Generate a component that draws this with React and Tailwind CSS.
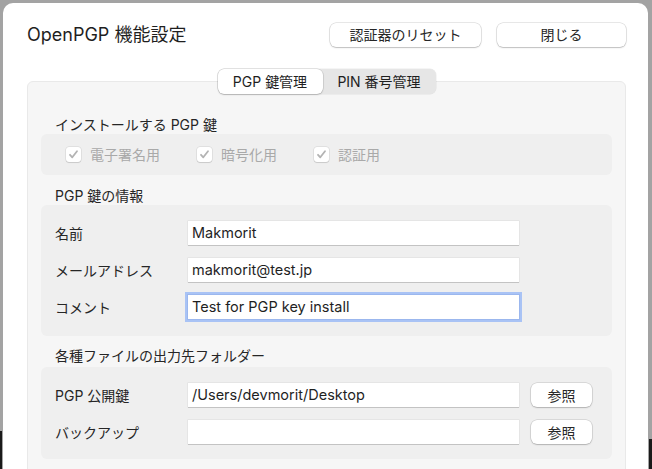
const font = { fontFamily: '"Inter", "Noto Sans CJK JP", sans-serif' };

const Button = ({ children, className = "" }) => (
  <button
    className={`h-[24px] rounded-[6px] bg-white text-[14px] text-[#262626] shadow-[0_0_0_0.5px_rgba(0,0,0,0.18),0_1px_1.5px_rgba(0,0,0,0.18)] ${className}`}
  >
    {children}
  </button>
);

const Field = ({ value, focused }) => (
  <div
    className={`flex h-[24px] w-[331px] items-center bg-white px-[4px] text-[14.5px] text-[#1f1f1f] ${
      focused
        ? "shadow-[0_0_0_1px_#9bb7ee,0_0_0_3px_#a9c3f5]"
        : "shadow-[0_0_0_0.5px_rgba(0,0,0,0.08),0_1px_0_rgba(0,0,0,0.15)]"
    }`}
  >
    {value}
  </div>
);

const Check = ({ label }) => (
  <div className="flex items-center gap-[9px]">
    <div className="flex h-[15px] w-[15px] items-center justify-center rounded-[3px] bg-white shadow-[0_0_0_0.5px_rgba(0,0,0,0.12),0_1px_1px_rgba(0,0,0,0.1)]">
      <svg width="11" height="11" viewBox="0 0 11 11">
        <path d="M2 5.8 L4.3 8.3 L9 2.2" fill="none" stroke="#b3b3b3" strokeWidth="1.8" strokeLinecap="round" strokeLinejoin="round" />
      </svg>
    </div>
    <span className="text-[14px] text-[#a9a9a9]">{label}</span>
  </div>
);

const SectionLabel = ({ children }) => (
  <div className="h-[17px] pl-[14px] text-[14px] leading-[17px] text-[#262626]">{children}</div>
);

const Row = ({ label, value, focused, browse }) => (
  <div className="flex items-center">
    <div className="w-[133px] text-[14px] text-[#262626]">{label}</div>
    <Field value={value} focused={focused} />
    {browse && <Button className="ml-[12px] w-[61px]">参照</Button>}
  </div>
);

const App = () => {
  return (
    <div className="relative h-[469px] w-[652px] overflow-hidden bg-[#a3a3a3] pl-[3px] pr-[4px] pt-[3px]" style={font}>
      <div className="absolute bottom-0 left-0 h-[38px] w-[2px] bg-[#1a1a1a]" />
      <div className="absolute bottom-0 right-0 h-[30px] w-[3px] bg-[#1a1a1a]" />
      <div className="flex h-full flex-col rounded-t-[10px] bg-white">
        <div className="flex items-center pl-[24px] pr-[22px] pt-[18px]">
          <div className="text-[18px] text-[#1f1f1f]">OpenPGP 機能設定</div>
          <div className="ml-auto flex gap-[16px]">
            <Button className="w-[151px]">認証器のリセット</Button>
            <Button className="w-[129px]">閉じる</Button>
          </div>
        </div>

        <div className="ml-[24px] mr-[22px] mt-[21px] flex flex-col">
          <div className="relative z-10 flex self-center rounded-[6px] bg-[#e6e6e6] shadow-[0_0_0_0.5px_rgba(0,0,0,0.08)]">
            <div className="flex h-[25px] w-[105px] items-center justify-center rounded-[6px] bg-white text-[14px] text-[#1f1f1f] shadow-[0_0_0_0.5px_rgba(0,0,0,0.15),0_1px_1.5px_rgba(0,0,0,0.18)]">
              PGP 鍵管理
            </div>
            <div className="flex h-[25px] w-[113px] items-center justify-center text-[14px] text-[#1f1f1f]">
              PIN 番号管理
            </div>
          </div>

          <div className="-mt-[13px] h-[400px] rounded-t-[6px] border border-[#e9e9e9] bg-[#f6f6f6] px-[13px] pt-[34px]">
            <SectionLabel>インストールする PGP 鍵</SectionLabel>
            <div className="mt-[1px] flex h-[41px] items-center gap-[37px] rounded-[6px] bg-[#efefef] pl-[25px]">
              <Check label="電子署名用" />
              <Check label="暗号化用" />
              <Check label="認証用" />
            </div>

            <div className="mt-[12px]">
              <SectionLabel>PGP 鍵の情報</SectionLabel>
            </div>
            <div className="mt-[1px] flex flex-col gap-[13px] rounded-[6px] bg-[#efefef] pb-[17px] pl-[14px] pt-[16px]">
              <Row label="名前" value="Makmorit" />
              <Row label="メールアドレス" value="makmorit@test.jp" />
              <Row label="コメント" value="Test for PGP key install" focused />
            </div>

            <div className="mt-[11px]">
              <SectionLabel>各種ファイルの出力先フォルダー</SectionLabel>
            </div>
            <div className="mt-[3px] flex flex-col gap-[13px] rounded-[6px] bg-[#efefef] pb-[15px] pl-[14px] pt-[16px]">
              <Row label="PGP 公開鍵" value="/Users/devmorit/Desktop" browse />
              <Row label="バックアップ" value="" browse />
            </div>
          </div>
        </div>
      </div>
    </div>
  );
};

export default App;
